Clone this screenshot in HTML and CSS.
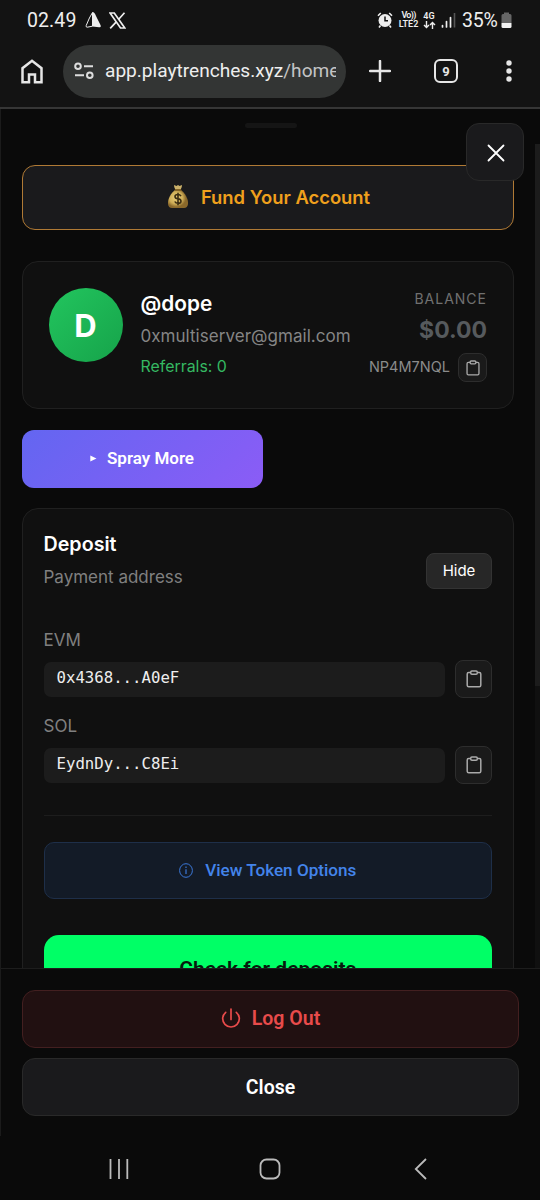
FILE: index.html
```html
<!DOCTYPE html>
<html lang="en">
<head>
<meta charset="utf-8">
<title>Account</title>
<link rel="stylesheet" href="styles.css">
</head>
<body>
<svg class="defs" width="0" height="0" aria-hidden="true">
  <symbol id="clipboard" viewBox="0 0 16 18"><path d="M5 2.500H2.700Q1.200 2.500 1.200 4v11.300q0 1.500 1.500 1.500h10.600q1.500 0 1.500-1.500V4q0-1.500-1.500-1.500H11"/><rect x="4.700" y="1" width="6.600" height="3.200" rx="1.200"/></symbol>
</svg>
<div class="phone">
  <header class="status">
    <span class="time">02.49</span>
    <svg class="tri" width="16" height="18" viewBox="0 0 16 18"><path d="M7.500 1.500Q4.500 6 1.200 14.500q-.5 1.700 1 1.700l5.300-1z" fill="none" stroke="#eee"/><path d="M7.500 1Q9.500 1 11 5l4.500 9q1 2.700-1.500 2.200L7.500 15.500z" fill="#eee"/></svg>
    <svg class="x" width="17" height="17" viewBox="0 0 17 17" fill="none" stroke="#eee"><path d="M1 1h4.300l10.500 15h-4.300z" stroke-width="1.700"/><path d="M15.500.8 9.500 7.500M7.300 9.800 1.200 16.300" stroke-width="1.700"/></svg>
    <svg class="alarm" width="16" height="16" viewBox="0 0 16 16"><circle cx="8" cy="8.500" r="6.500" fill="#eee"/><path d="M1 3.800 3.800 1M15 3.800 12.200 1M3.500 13.500 2 15.500M12.500 13.500l1.500 2" stroke="#eee" stroke-width="1.600"/><path d="M8 4.500v4.300h3" fill="none" stroke="#131313" stroke-width="1.500"/></svg>
    <span class="tiny lte"><span class="vo">Vo))</span><span>LTE2</span></span>
    <span class="tiny net"><span>4G</span><svg width="13" height="8" viewBox="0 0 13 8" fill="none" stroke="#eee" stroke-width="1.400"><path d="M3.500 0v6.500M1 4l2.500 2.500L6 4M9.500 8V1.500M7 4l2.500-2.500L12 4"/></svg></span>
    <svg class="signal" width="15" height="15" viewBox="0 0 15 15"><path d="M1.500 12.500V14M5.500 8.500V14M9.500 4.500V14" stroke="#eee" stroke-width="1.700" stroke-linecap="round"/><path d="M13.500 0v14.500" stroke="#555" stroke-width="1.600"/></svg>
    <span class="percent">35%</span>
    <svg class="battery" width="11" height="17" viewBox="0 0 11 17"><path d="M3 2V.5h5V2h1q1.500 0 1.500 1.500V11H.5V3.500Q.5 2 2 2z" fill="#666"/><path d="M.5 11h10v3.500q0 1.500-1.500 1.500H2Q.5 16 .5 14.500z" fill="#f2f2f2"/></svg>
  </header>
  <div class="toolbar">
    <svg class="home" width="22" height="25" viewBox="0 0 22 25"><path d="M1.500 23.200V9.200L11 1.800l9.500 7.400v14H14v-7.700H8v7.700z" fill="none" stroke="#e6e6e6" stroke-width="2.500"/></svg>
    <div class="url">
      <svg width="20" height="18" viewBox="0 0 20 18" fill="none" stroke="#ddd" stroke-width="2"><circle cx="4" cy="4.200" r="2.800"/><circle cx="15.800" cy="13.300" r="2.800"/><path d="M10 4.200h9M1 13.300h9"/></svg>
      <span class="address">app.playtrenches.xyz<span class="path">/home</span></span>
    </div>
    <svg class="plus" width="22" height="22" viewBox="0 0 22 22"><path d="M11 1v20M1 11h20" stroke="#e6e6e6" stroke-width="2.500" stroke-linecap="round"/></svg>
    <span class="tabs">9</span>
    <svg class="dots" width="6" height="22" viewBox="0 0 6 22" fill="#e6e6e6"><circle cx="3" cy="3" r="2.700"/><circle cx="3" cy="11" r="2.700"/><circle cx="3" cy="19" r="2.700"/></svg>
  </div>
  <main class="sheet">
    <div class="scroll">
      <div class="handle"></div>
      <button class="fund">
        <svg width="22" height="25" viewBox="0 0 22 25"><defs><radialGradient id="bag" cx=".4" cy=".45"><stop offset="0" stop-color="#e6ca76"/><stop offset=".65" stop-color="#cfae57"/><stop offset="1" stop-color="#8b692b"/></radialGradient></defs><path d="M8.500 6Q6.800 3 7 1l2.500 1L11 1l1.500 1L15 1q.2 2-1.500 5z" fill="#cbb16a"/><path d="M8.500 5.500h5C18 9 21.500 15 21 20q-.5 4-4 4H5q-3.500 0-4-4C.5 15 4 9 8.500 5.500z" fill="url(#bag)"/><path d="M7.800 6h6.400" stroke="#77571e" stroke-width="1.500"/><path d="M14 12.200q-1-1.700-3-1.700c-4 0-4 3.900 0 4.300s4 4.500 0 4.500q-2.300 0-3.200-1.800M11 8.700v12.500" fill="none" stroke="#3b2d12" stroke-width="1.600"/></svg>
        <span>Fund Your Account</span>
      </button>
      <button class="dismiss" aria-label="Close"><svg width="18" height="18" viewBox="0 0 18 18"><path d="m1.500 1.500 15 15m0-15-15 15" stroke="#fff" stroke-width="1.800" stroke-linecap="round"/></svg></button>
      <section class="card profile">
        <div class="avatar">D</div>
        <div class="who">
          <div class="name">@dope</div>
          <div class="mail">0xmultiserver@gmail.com</div>
          <div class="refs">Referrals: 0</div>
        </div>
        <div class="balance">
          <div class="label">BALANCE</div>
          <div class="amount">$0.00</div>
          <div class="code"><span>NP4M7NQL</span><button class="copy small" aria-label="Copy"><svg width="14" height="16"><use href="#clipboard"/></svg></button></div>
        </div>
      </section>
      <button class="spray"><svg width="7" height="7" viewBox="0 0 7 7"><path d="M.3.500 6.500 3.500.3 6.500z" fill="#fff"/></svg><span>Spray More</span></button>
      <section class="card deposit">
        <div class="head">
          <div><h2>Deposit</h2><p>Payment address</p></div>
          <button class="hide">Hide</button>
        </div>
        <div class="chain evm">EVM</div>
        <div class="row"><div class="field">0x4368...A0eF</div><button class="copy" aria-label="Copy EVM"><svg width="16" height="18"><use href="#clipboard"/></svg></button></div>
        <div class="chain sol">SOL</div>
        <div class="row"><div class="field">EydnDy...C8Ei</div><button class="copy" aria-label="Copy SOL"><svg width="16" height="18"><use href="#clipboard"/></svg></button></div>
        <hr>
        <button class="tokens"><svg width="14" height="15" viewBox="0 0 14 15"><ellipse cx="7" cy="7.500" rx="6.400" ry="6.800" fill="none" stroke="#3b78d8"/><path d="M7 6.300V11M7 3.600v1.300" fill="none" stroke="#3b78d8" stroke-width="1.200"/></svg><span>View Token Options</span></button>
        <button class="check">Check for deposits</button>
      </section>
      <div class="track"><div class="thumb"></div></div>
    </div>
    <footer class="actions">
      <button class="logout"><svg width="20" height="21" viewBox="0 0 20 21"><path d="M4.700 4.300A8.300 8.300 0 1 0 15.300 4.300M10 1v10.500" fill="none" stroke="#e84b4b" stroke-width="1.700" stroke-linecap="round"/></svg><span>Log Out</span></button>
      <button class="close">Close</button>
    </footer>
  </main>
  <nav class="nav">
    <svg width="20" height="22" viewBox="0 0 20 22"><path d="M1.500 1v20M10 1v20M18.300 1v20" stroke="#bbb" stroke-width="1.800"/></svg>
    <svg class="nav-home" width="22" height="22" viewBox="0 0 22 22"><rect x="1.500" y="1.500" width="19" height="19" rx="6" fill="none" stroke="#bbb" stroke-width="1.800"/></svg>
    <svg width="13" height="22" viewBox="0 0 13 22"><path d="M12 1 1.800 11 12 21" fill="none" stroke="#bbb" stroke-width="1.800"/></svg>
  </nav>
</div>
</body>
</html>
```
FILE: styles.css
```css
* { box-sizing: border-box; }
body { margin: 0; background: #0a0a0a; color: #fff; font-family: Inter, sans-serif; }
button { font: inherit; color: inherit; padding: 0; border: 0; display: flex; align-items: center; justify-content: center; }
svg { flex: none; display: block; }
h2, p { margin: 0; }
.defs { position: absolute; }
.phone { width: 540px; height: 1200px; display: flex; flex-direction: column; overflow: hidden; }

.status { height: 41px; flex: none; background: #131313; display: flex; align-items: center; padding: 0 0 1px 27px; color: #eee; font-family: Roboto, sans-serif; font-size: 19.500px; }
.time { width: 50px; letter-spacing: .1px; }
.tri { margin-left: 8px; }
.x { margin-left: 8px; }
.alarm { margin-left: 251px; }
.tiny { display: flex; flex-direction: column; align-items: center; font-size: 9px; line-height: 9px; font-weight: 600; }
.vo { letter-spacing: -.7px; }
.lte { margin-left: 5px; width: 21px; }
.net { margin-left: 3px; width: 14px; }
.signal { margin-left: 5px; }
.percent { margin-left: 6px; width: 38px; letter-spacing: -.2px; }
.battery { margin-left: 1px; }

.toolbar { height: 68px; flex: none; background: #131313; border-bottom: 2px solid #363636; display: flex; align-items: center; padding: 0 28px 6px 20px; }
.home { margin-left: 1px; }
.url { width: 283px; height: 53px; margin-left: 20px; border-radius: 27px; background: #333534; display: flex; align-items: center; gap: 11px; padding: 0 10px 0 11px; }
.address { width: 231px; overflow: hidden; white-space: nowrap; font: 19.100px/28px Roboto, sans-serif; color: #eee; }
.path { color: #c4c4c4; }
.plus { margin-left: 23px; }
.tabs { width: 24px; height: 24px; margin-left: 43px; border: 2.500px solid #e6e6e6; border-radius: 6px; display: flex; align-items: center; justify-content: center; font: 700 13px/1 Roboto, sans-serif; color: #e6e6e6; }
.dots { margin-left: 48px; }

.sheet { height: 1027px; flex: none; border-left: 1px solid #1b1b1b; display: flex; flex-direction: column; }
.scroll { position: relative; height: 859px; overflow: hidden; padding: 14px 26px 0 21px; }
.handle { width: 52px; height: 5px; margin: 0 0 0 223px; border-radius: 3px; background: #151515; }
.fund { width: 100%; height: 65px; margin-top: 37px; padding: 0 0 2px 1px; border: 1px solid #b07a35; border-radius: 13px; background: #1a1a1c; color: #f0a01c; font-size: 18.400px; font-weight: 600; gap: 12px; }
.dismiss { position: absolute; left: 465px; top: 14px; width: 58px; height: 58px; padding: 1px 0 0 1px; border: 1px solid #292929; border-radius: 13px; background: #1a1a1c; }
.card { border: 1px solid #202020; border-radius: 16px; background: #101010; }
.profile { height: 148px; margin-top: 31px; display: flex; padding: 26px 26px 26px 25.500px; }
.avatar { width: 74px; height: 74px; border-radius: 50%; background: linear-gradient(135deg, #22c55e, #16a34a); display: flex; align-items: center; justify-content: center; font-size: 31px; font-weight: 700; }
.who { margin-left: 18px; white-space: nowrap; }
.name { font-size: 20.800px; font-weight: 600; line-height: 32px; }
.mail { font-size: 17px; line-height: 33.500px; color: #858585; letter-spacing: .04px; }
.refs { font-size: 15.900px; line-height: 25px; color: #35b862; }
.balance { margin-left: auto; width: 120px; display: flex; flex-direction: column; align-items: flex-end; }
.label { font-size: 14px; line-height: 22px; color: #707070; letter-spacing: 1px; }
.amount { font-size: 23px; line-height: 40px; font-weight: 700; color: #565a5d; }
.code { display: flex; align-items: center; gap: 8px; font-size: 14.500px; line-height: 28px; color: #8b8b8b; margin-top: 3px; }
.code span { padding-bottom: 1px; }
.copy { width: 37px; height: 38px; flex: none; border: 1px solid #2d2d2d; border-radius: 8px; background: #1a1a1a; }
.copy svg { fill: none; stroke: #aaa; stroke-width: 1.500; }
.copy.small { width: 29px; height: 29px; }
.spray { width: 241px; height: 58px; margin-top: 21px; padding: 0 1px 2px 0; border-radius: 12px; background: linear-gradient(135deg, #6366f1, #8b5cf6); font: 600 17px Roboto, sans-serif; gap: 10px; }

.deposit { margin-top: 20px; height: 600px; padding: 18px 21px 18px 20.500px; }
.head { display: flex; justify-content: space-between; }
.head h2 { font-size: 19.700px; line-height: 34px; font-weight: 600; }
.head p { font-size: 17px; line-height: 33px; color: #808080; }
.hide { width: 66px; height: 36px; margin-top: 26px; border: 1px solid #333; border-radius: 8px; background: #272727; font-size: 15px; padding-bottom: 2px; }
.chain { font-size: 17px; line-height: 24px; color: #808080; }
.evm { margin-top: 34px; }
.sol { margin-top: 15px; }
.row { display: flex; align-items: center; justify-content: space-between; margin-top: 8px; }
.row + .sol { margin-top: 16px; }
.field { width: 401px; height: 35px; border-radius: 7px; background: #1c1c1c; padding-left: 13px; font: 15.700px/32px "DejaVu Sans Mono", monospace; color: #eee; }
hr { border: 0; border-top: 1px solid #1d1d1d; margin: 31px 0 26px; }
.tokens { width: 100%; height: 57px; padding-bottom: 1px; border: 1px solid #1e2f49; border-radius: 10px; background: #131b27; color: #4384ea; font: 500 17.100px Roboto, sans-serif; gap: 12px; }
.check { width: 100%; height: 67px; margin-top: 36px; border-radius: 15px; background: #00ff66; color: #061a0d; font: 600 21px Roboto, sans-serif; }
.track { position: absolute; top: 35px; right: 0; bottom: 0; width: 5px; background: #101010; }
.thumb { height: 542px; background: #1c1c1c; }

.actions { height: 168px; border-top: 1px solid #1d1d1d; padding: 21px 21px 0; display: flex; flex-direction: column; gap: 10px; font: 600 19.500px Roboto, sans-serif; }
.actions button { height: 58px; border: 1px solid #292929; border-radius: 13px; background: #1a1a1c; }
.actions .logout { background: #211011; border-color: #431f20; color: #e84b4b; gap: 11px; padding-bottom: 1px; }
.nav { height: 64px; display: flex; align-items: center; justify-content: space-between; padding: 2px 113px 0 109px; }
.nav-home { margin-right: 4px; }
```
